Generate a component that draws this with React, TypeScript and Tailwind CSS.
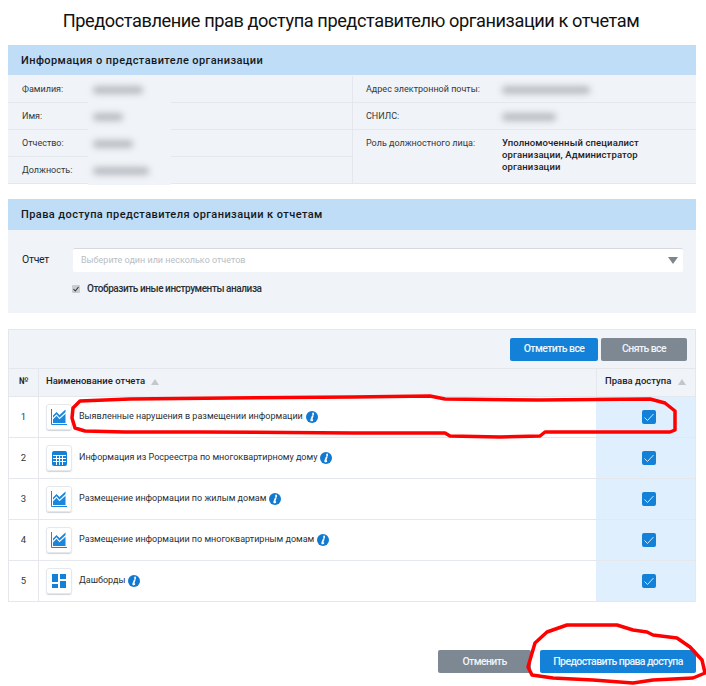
const font = "font-['Roboto',sans-serif]";

function Blur({ w }: { w: number }) {
  return <div className="h-[8px] rounded-sm bg-[#b9bdc3] blur-[3px]" style={{ width: w }} />;
}

function InfoRow({ label, w, last }: { label: string; w: number; last?: boolean }) {
  return (
    <div className={`flex items-center pl-[14px] pt-px ${last ? "h-[26px]" : "h-[27px] border-b border-[#e4e8ed]"}`}>
      <div className="w-[66px] shrink-0 text-[9px] text-[#33383d]">{label}</div>
      <div className="-mb-px flex h-[27px] w-[83px] items-center bg-[#f0f3f7] pl-[5px]">
        <Blur w={w} />
      </div>
    </div>
  );
}

function Panel({ title, head, children, className = "" }: { title: string; head: string; children: React.ReactNode; className?: string }) {
  return (
    <section className={`mx-2 w-[688px] bg-[#f0f3f7] ${className}`}>
      <div className={`flex items-center bg-[#bfddf6] pl-[13px] text-[11px] font-medium tracking-[0.42px] text-[#14181c] ${head}`}>
        {title}
      </div>
      {children}
    </section>
  );
}

function ChartIcon() {
  return (
    <svg width="16" height="16" viewBox="0 0 16 16">
      <path d="M0.5 0V15.5H16" fill="none" stroke="#1a87dd" strokeWidth="1" />
      <path d="M2 14V6.5L5.5 3L8.5 6L14.5 0.5V14Z" fill="#1a87dd" />
      <path d="M1.5 10L5.5 6L8.5 9.5L15 3.5" fill="none" stroke="#ffffff" strokeWidth="1.1" />
    </svg>
  );
}

function TableIcon() {
  return (
    <svg width="15" height="15" viewBox="0 0 15 15">
      <rect width="15" height="15" rx="2" fill="#1481d8" />
      <path d="M1 4.5H14M1 7.5H14M1 10.5H14M4.5 4.5V14M7.5 4.5V14M10.5 4.5V14" stroke="#ffffff" strokeWidth="1" />
    </svg>
  );
}

function DashIcon() {
  return (
    <svg width="14" height="14" viewBox="0 0 14 14">
      <path d="M0 0H6V8H0ZM8 0H14V5H8ZM8 7H14V14H8ZM0 10H6V14H0Z" fill="#1481d8" />
    </svg>
  );
}

function Info() {
  return (
    <svg width="12" height="12" viewBox="0 0 12 12" className="ml-[3px] shrink-0">
      <circle cx="6" cy="6" r="6" fill="#1179d0" />
      <path d="M7.1 2.3V3.6M6.7 5C6.2 6.6 5.4 8 5.2 9C5.1 9.6 5.6 9.7 6.4 9" fill="none" stroke="#ffffff" strokeWidth="1.7" strokeLinecap="round" />
    </svg>
  );
}

function Check() {
  return (
    <svg width="14" height="14" viewBox="0 0 14 14">
      <rect width="14" height="14" rx="2" fill="#1481d8" />
      <path d="M2.5 7.5L5.5 10.5L11.5 4" fill="none" stroke="#ffffff" strokeWidth="0.8" />
    </svg>
  );
}

const rows: { n: number; t: string; icon: React.ReactNode }[] = [
  { n: 1, t: "Выявленные нарушения в размещении информации", icon: <ChartIcon /> },
  { n: 2, t: "Информация из Росреестра по многоквартирному дому", icon: <TableIcon /> },
  { n: 3, t: "Размещение информации по жилым домам", icon: <ChartIcon /> },
  { n: 4, t: "Размещение информации по многоквартирным домам", icon: <ChartIcon /> },
  { n: 5, t: "Дашборды", icon: <DashIcon /> },
];

function Sort({ className = "ml-[6px]" }: { className?: string }) {
  return <span className={`inline-block h-0 w-0 border-x-[4px] border-b-[6px] border-x-transparent border-b-[#c3c7cc] ${className}`} />;
}

function Btn({ w, blue, children }: { w: number; blue?: boolean; children: React.ReactNode }) {
  return (
    <button
      className={`flex h-[23px] items-center justify-center rounded-[2px] text-[10.5px] font-medium tracking-[-0.6px] text-[#eef4fa] ${blue ? "bg-[#1481d8]" : "bg-[#7d8893]"}`}
      style={{ width: w }}
    >
      {children}
    </button>
  );
}

export default function App() {
  return (
    <div className={`relative h-[686px] w-[706px] overflow-hidden bg-white ${font}`}>
      <h1 className="h-[45px] pt-[9px] pr-[4px] text-center text-[18.2px] leading-[24px] font-normal tracking-[-0.43px] text-[#111]">
        Предоставление прав доступа представителю организации к отчетам
      </h1>

      <Panel title="Информация о представителе организации" head="h-[30px] pt-[2px]" className="h-[139px] border-b border-[#e4e8ed]">
        <div className="flex pt-px">
          <div className="w-[345px] border-r border-[#e4e8ed]">
            <InfoRow label="Фамилия:" w={50} />
            <InfoRow label="Имя:" w={30} />
            <InfoRow label="Отчество:" w={40} />
            <InfoRow label="Должность:" w={56} last />
          </div>
          <div className="flex-1">
            <div className="flex h-[27px] items-center border-b border-[#e4e8ed] pl-[13px] pt-px">
              <div className="w-[136px] shrink-0 text-[9px] text-[#33383d]">Адрес электронной почты:</div>
              <Blur w={88} />
            </div>
            <div className="flex h-[27px] items-center border-b border-[#e4e8ed] pl-[13px] pt-px">
              <div className="w-[136px] shrink-0 text-[9px] text-[#33383d]">СНИЛС:</div>
              <Blur w={54} />
            </div>
            <div className="flex pl-[13px] pt-[7px]">
              <div className="w-[136px] shrink-0 text-[9px] leading-[12px] text-[#33383d]">Роль должностного лица:</div>
              <div className="w-[150px] text-[9.5px] leading-[12px] font-medium tracking-[0.12px] text-[#1c2126]">
                Уполномоченный специалист организации, Администратор организации
              </div>
            </div>
          </div>
        </div>
      </Panel>

      <Panel title="Права доступа представителя организации к отчетам" head="h-[31px] pt-[1px]" className="mt-[15px] h-[114px]">
        <div className="flex items-center pt-[18px]">
          <div className="w-[65px] pl-[14px] text-[10.5px] tracking-[-0.3px] text-[#1c2126]">Отчет</div>
          <div className="flex h-[24px] w-[610px] items-center justify-between rounded-[2px] border-t border-[#d5d8dc] bg-white pl-[8px] pr-[5px]">
            <span className="text-[9px] text-[#b9bec4]">Выберите один или несколько отчетов</span>
            <span className="h-0 w-0 border-x-[5px] border-t-[7px] border-x-transparent border-t-[#7e858c]" />
          </div>
        </div>
        <label className="mt-[9px] ml-[64px] flex items-center gap-[7px] text-[10px] font-medium tracking-[-0.43px] text-[#2a2f34]">
          <span className="flex h-[8px] w-[8px] items-center justify-center rounded-[1px] bg-[#c9cdd2]">
            <svg width="6" height="6" viewBox="0 0 6 6"><path d="M0.5 3L2.3 5L5.5 1" fill="none" stroke="#333" strokeWidth="1.1" /></svg>
          </span>
          Отобразить иные инструменты анализа
        </label>
      </Panel>

      <section className="mx-2 mt-[16px] w-[688px] border-t border-x border-[#e4e8ed]">
        <div className="flex h-[39px] items-center justify-end gap-[3px] border-b border-[#e4e8ed] bg-[#f0f3f7] pr-[8px]">
          <Btn w={88} blue>Отметить все</Btn>
          <Btn w={86}>Снять все</Btn>
        </div>
        <div className="flex h-[28px] border-b border-[#e4e8ed] bg-[#f0f3f7] text-[9.5px] font-medium text-[#1c2126]">
          <div className="flex w-[30px] items-center justify-center border-r border-[#e4e8ed] pb-[2px]">№</div>
          <div className="flex flex-1 items-center pl-[7px] pb-[2px]">Наименование отчета<Sort /></div>
          <div className="flex w-[99px] items-center border-l border-[#e4e8ed] pl-[8px] pb-[2px]">Права доступа<Sort className="ml-[7px]" /></div>
        </div>
        {rows.map((r) => (
          <div key={r.n} className="flex h-[41px] border-b border-[#e4e8ed] bg-white">
            <div className="flex w-[30px] items-center justify-center border-r border-[#e4e8ed] text-[9.5px] text-[#33383d]">{r.n}</div>
            <div className="flex flex-1 items-center pl-[7px]">
              <div className="flex h-[26px] w-[26px] items-center justify-center rounded-[3px] border border-[#e4e8ed] shadow-[0_1px_1px_#cfd4da]">
                {r.icon}
              </div>
              <span className="ml-[7px] text-[9px] text-[#2a2f34]">{r.t}</span>
              <Info />
            </div>
            <div className="flex w-[99px] items-center justify-center bg-[#e0effd] pl-[7px]">
              <Check />
            </div>
          </div>
        ))}
      </section>

      <div className="mt-[48px] flex justify-end gap-[9px] pr-[10px]">
        <Btn w={93}>Отменить</Btn>
        <Btn w={156} blue>Предоставить права доступа</Btn>
      </div>

      <svg className="pointer-events-none absolute inset-0" width="706" height="686" viewBox="0 0 706 686">
        <path
          d="M72 418L73 408L80 401L130 399L230 398L353 397L430 396L445 399L538 400L650 399L665 403L675 411L675 430L670 432L545 432L540 436L500 437L450 436L445 433L353 433L200 432L125 432L85 431L75 428Z"
          fill="none" stroke="#ff0000" strokeWidth="3.5" strokeLinejoin="round"
        />
        <path
          d="M530 660L535 643L547 632L567 625L617 625L633 630L647 632L653 635L677 638L690 647L702 660L705 673L693 678L653 680L633 683L593 680L553 678L532 675L528 667Z"
          fill="none" stroke="#ff0000" strokeWidth="3.5" strokeLinejoin="round"
        />
      </svg>
    </div>
  );
}
